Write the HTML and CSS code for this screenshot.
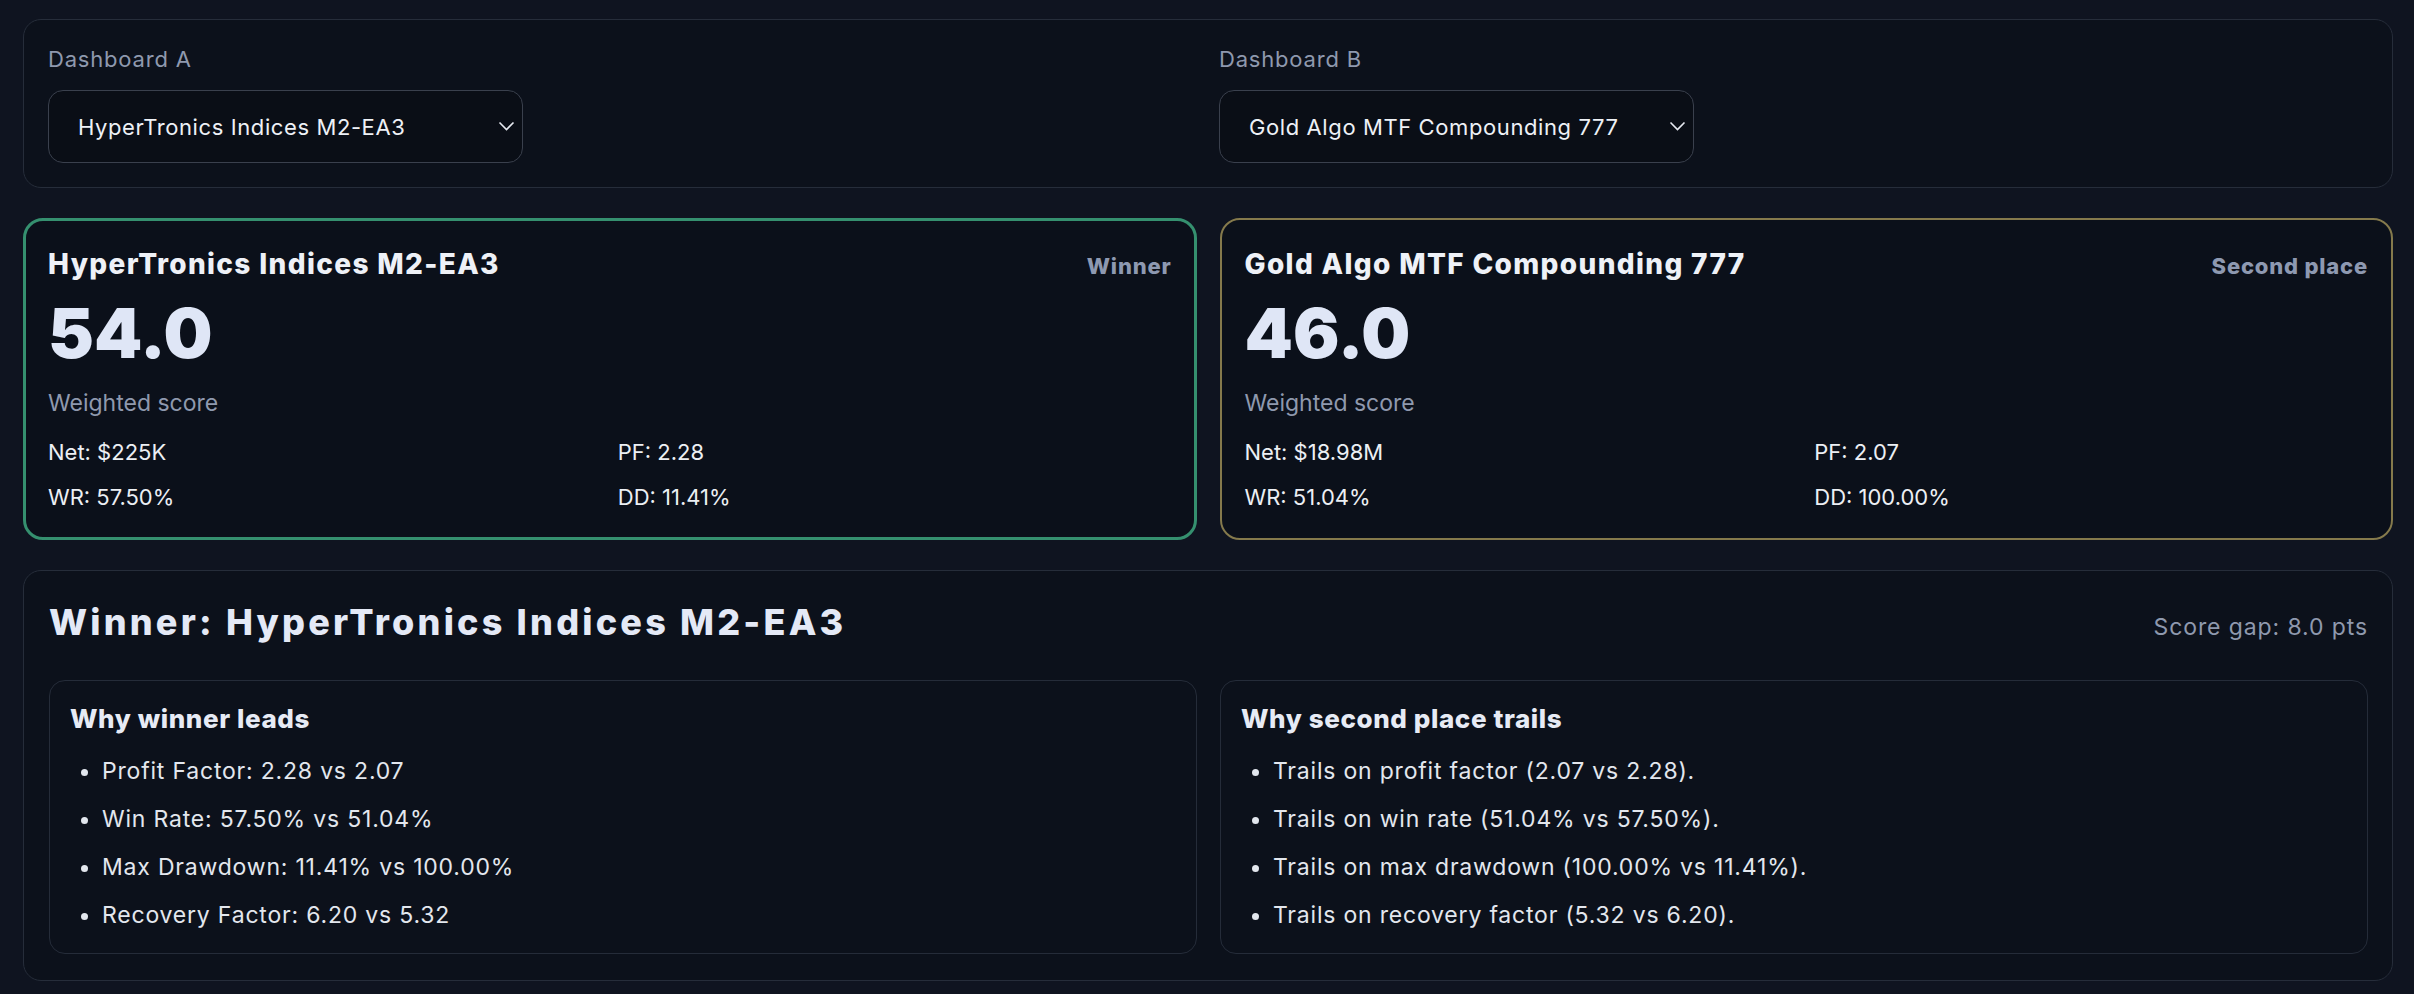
FILE: index.html
```html
<!DOCTYPE html>
<html>
<head>
<meta charset="utf-8">
<meta name="viewport" content="width=device-width, initial-scale=1.0">
<title>Dashboard comparison</title>
<link rel="stylesheet" href="styles.css">
</head>
<body>
  <main class="page">
    <!-- dashboard pickers -->
    <section class="panel pickers">
      <div class="picker">
        <label class="picker-label" for="dash-a">Dashboard A</label>
        <div class="select-wrap">
          <select id="dash-a" class="select">
            <option>HyperTronics Indices M2-EA3</option>
          </select>
          <svg class="chevron" width="17" height="10" viewBox="0 0 17 10"><polyline points="1.5,1.5 8.5,8.5 15.5,1.5" /></svg>
        </div>
      </div>
      <div class="picker">
        <label class="picker-label" for="dash-b">Dashboard B</label>
        <div class="select-wrap">
          <select id="dash-b" class="select">
            <option>Gold Algo MTF Compounding 777</option>
          </select>
          <svg class="chevron" width="17" height="10" viewBox="0 0 17 10"><polyline points="1.5,1.5 8.5,8.5 15.5,1.5" /></svg>
        </div>
      </div>
    </section>

    <!-- score cards -->
    <section class="cards">
      <article class="card card-win">
        <header class="card-head">
          <h3 class="card-title">HyperTronics Indices M2-EA3</h3>
          <span class="card-tag">Winner</span>
        </header>
        <div class="score">54.0</div>
        <div class="score-label">Weighted score</div>
        <div class="metrics">
          <span>Net: $225K</span>
          <span>PF: 2.28</span>
          <span>WR: 57.50%</span>
          <span>DD: 11.41%</span>
        </div>
      </article>
      <article class="card card-second">
        <header class="card-head">
          <h3 class="card-title">Gold Algo MTF Compounding 777</h3>
          <span class="card-tag">Second place</span>
        </header>
        <div class="score">46.0</div>
        <div class="score-label">Weighted score</div>
        <div class="metrics">
          <span>Net: $18.98M</span>
          <span>PF: 2.07</span>
          <span>WR: 51.04%</span>
          <span>DD: 100.00%</span>
        </div>
      </article>
    </section>

    <!-- verdict -->
    <section class="panel verdict">
      <header class="verdict-head">
        <h2 class="verdict-title">Winner: HyperTronics Indices M2-EA3</h2>
        <span class="verdict-gap">Score gap: 8.0 pts</span>
      </header>
      <div class="reasons">
        <div class="reason-box">
          <h4 class="reason-title">Why winner leads</h4>
          <ul class="reason-list">
            <li>Profit Factor: 2.28 vs 2.07</li>
            <li>Win Rate: 57.50% vs 51.04%</li>
            <li>Max Drawdown: 11.41% vs 100.00%</li>
            <li>Recovery Factor: 6.20 vs 5.32</li>
          </ul>
        </div>
        <div class="reason-box">
          <h4 class="reason-title">Why second place trails</h4>
          <ul class="reason-list">
            <li>Trails on profit factor (2.07 vs 2.28).</li>
            <li>Trails on win rate (51.04% vs 57.50%).</li>
            <li>Trails on max drawdown (100.00% vs 11.41%).</li>
            <li>Trails on recovery factor (5.32 vs 6.20).</li>
          </ul>
        </div>
      </div>
    </section>
  </main>
</body>
</html>
```

FILE: styles.css
```css
body {
  margin: 0;
  padding: 19px 21px 14px 23px;
  background: #0f1420;
  color: #e6e9f0;
  font-family: Inter, Lato, sans-serif;
}
.page {
  display: flex;
  flex-direction: column;
  gap: 30px;
}
.panel {
  background: #0c111b;
  border: 1px solid #262d3a;
  border-radius: 18px;
}

/* pickers */
.pickers {
  display: grid;
  grid-template-columns: 1fr 1fr;
  column-gap: 22px;
  padding: 26px 24px 24px 24px;
}
.picker-label {
  display: block;
  margin-bottom: 17px;
  font-size: 22px;
  line-height: 27px;
  letter-spacing: 0.8px;
  color: #8f99ae;
}
.select-wrap {
  position: relative;
  width: 475px;
}
.select {
  appearance: none;
  -webkit-appearance: none;
  width: 475px;
  height: 73px;
  padding: 0 45px 0 29px;
  background: #0a0e16;
  border: 1px solid #3a404d;
  border-radius: 15px;
  color: #eef1f6;
  font-family: Inter, Lato, sans-serif;
  font-size: 22px;
  letter-spacing: 0.6px;
}
.chevron {
  position: absolute;
  right: 8px;
  top: 31px;
  fill: none;
  stroke: #e6e9f0;
  stroke-width: 1.6;
  pointer-events: none;
}

/* cards */
.cards {
  display: grid;
  grid-template-columns: 1fr 1fr;
  gap: 23px;
}
.card {
  background: #0b101a;
  border: 2px solid #857a4c;
  border-radius: 20px;
  padding: 27px 23px 27px 23px;
}
.card-win {
  border: 3px solid #35906f;
  padding: 26px 22px 26px 22px;
}
.card-head {
  display: flex;
  justify-content: space-between;
  align-items: baseline;
}
.card-title {
  margin: 0;
  font-size: 28px;
  font-weight: 800;
  line-height: 34px;
  letter-spacing: 1.35px;
  color: #eef1f7;
}
.card-tag {
  font-size: 22px;
  font-weight: 800;
  letter-spacing: 0.8px;
  color: #8e99b1;
}
.score {
  margin-top: 10px;
  font-size: 69px;
  font-weight: 900;
  line-height: 84px;
  color: #dfe6f6;
}
.score-label {
  margin-top: 14px;
  font-size: 23px;
  line-height: 28px;
  color: #8f99ae;
}
.metrics {
  display: grid;
  grid-template-columns: 1fr 1fr;
  column-gap: 16px;
  row-gap: 17px;
  margin-top: 21px;
  font-size: 22px;
  line-height: 28px;
  color: #eceff4;
}

/* verdict */
.verdict {
  padding: 25px 24px 26px 25px;
}
.verdict-head {
  display: flex;
  justify-content: space-between;
  align-items: baseline;
  margin-bottom: 32px;
}
.verdict-title {
  margin: 0;
  font-size: 36px;
  font-weight: 800;
  line-height: 52px;
  letter-spacing: 3.2px;
  color: #e4e9f6;
}
.verdict-gap {
  font-size: 23px;
  letter-spacing: 0.9px;
  color: #8f99ae;
}
.reasons {
  display: grid;
  grid-template-columns: 1fr 1fr;
  gap: 23px;
}
.reason-box {
  border: 1px solid #252c39;
  border-radius: 16px;
  padding: 22px 20px 24px 20px;
}
.reason-title {
  margin: 0 0 23px 0;
  font-size: 26px;
  font-weight: 800;
  line-height: 31px;
  letter-spacing: 0.6px;
  color: #e7ebf5;
}
.reason-list {
  margin: 0;
  padding-left: 32px;
  font-size: 23px;
  line-height: 28px;
  letter-spacing: 0.8px;
  color: #e3e7ee;
}
.reason-list li + li {
  margin-top: 20px;
}
```
